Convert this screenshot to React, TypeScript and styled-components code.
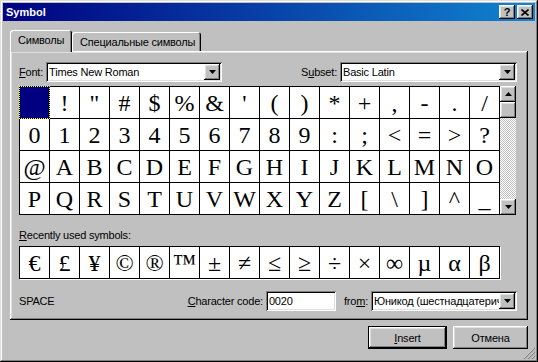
import styled, { createGlobalStyle, css } from "styled-components";

const GlobalStyle = createGlobalStyle`
  html, body {
    margin: 0;
    padding: 0;
    background: #c0c0c0;
  }

  body {
    font-family: "Liberation Sans", Arial, sans-serif;
    font-size: 11px;
    letter-spacing: -0.2px;
    color: #000;
  }

  * {
    box-sizing: border-box;
  }
`;

const raised = css`
  background: #c0c0c0;
  box-shadow: inset -1px -1px #000, inset 1px 1px #fff, inset -2px -2px #808080,
    inset 2px 2px #dfdfdf;
`;

const sunken = css`
  background: #fff;
  box-shadow: inset 1px 1px #808080, inset -1px -1px #fff, inset 2px 2px #000,
    inset -2px -2px #dfdfdf;
`;

const Window = styled.div`
  position: relative;

  display: flex;
  flex-direction: column;

  width: 538px;
  height: 362px;
  padding: 3px;

  background: #c0c0c0;
  box-shadow: inset -1px -1px #000, inset 1px 1px #dfdfdf, inset -2px -2px #808080,
    inset 2px 2px #fff;
`;

const TitleBar = styled.div`
  display: flex;
  align-items: center;
  justify-content: space-between;

  height: 18px;
  padding: 0 2px 0 3px;

  background: linear-gradient(to right, #000080, #1084d0);
`;

const Title = styled.div`
  font-weight: 700;
  font-size: 11px;
  letter-spacing: 0;
  color: #fff;
`;

const TitleButtons = styled.div`
  display: flex;
  gap: 2px;
`;

const TitleButton = styled.div`
  ${raised};

  display: flex;
  align-items: center;
  justify-content: center;

  width: 16px;
  height: 14px;

  font-weight: 700;
  font-size: 11px;
  line-height: 1;
`;

const Body = styled.div`
  display: flex;
  flex-direction: column;

  padding: 9px 7px 0 7px;
`;

const TabStrip = styled.div`
  display: flex;
  align-items: flex-end;

  height: 21px;
`;

interface TabProps {
  $active?: boolean;
}

const Tab = styled.div<TabProps>`
  position: relative;
  z-index: 1;

  display: flex;
  align-items: center;

  min-width: ${({ $active }) => ($active ? "62px" : "126px")};
  height: ${({ $active }) => ($active ? "22px" : "19px")};
  margin-bottom: ${({ $active }) => ($active ? "-1px" : "0")};
  padding: ${({ $active }) => ($active ? "0 6px 2px 8px" : "0 6px 0 8px")};

  white-space: nowrap;
  background: #c0c0c0;
  border-radius: 3px 3px 0 0;
  box-shadow: inset 1px 1px #fff, inset -1px 0 #000, inset -2px 0 #808080;
`;

const Panel = styled.div`
  display: flex;
  flex-direction: column;

  height: 269px;
  padding: 11px 11px 0 9px;

  box-shadow: inset -1px -1px #000, inset 1px 1px #fff, inset -2px -2px #808080,
    inset 2px 2px #dfdfdf;
`;

const FieldRow = styled.div`
  display: flex;
  align-items: center;
  justify-content: space-between;

  height: 20px;
`;

interface FieldGroupProps {
  $offset?: number;
}

const FieldGroup = styled.div<FieldGroupProps>`
  display: flex;
  align-items: center;
  gap: 3px;

  margin-left: ${({ $offset }) => $offset ?? 0}px;
`;

const Label = styled.span`
  white-space: nowrap;
`;

const Key = styled.span`
  text-decoration: underline;
`;

interface BoxProps {
  $width: number;
}

const Select = styled.div<BoxProps>`
  ${sunken};

  display: flex;
  align-items: center;

  width: ${({ $width }) => $width}px;
  height: 20px;
  padding: 2px;
`;

const SelectValue = styled.div`
  flex: 1;

  padding-left: 1px;
  overflow: hidden;

  white-space: nowrap;
  text-overflow: clip;
  line-height: 16px;
`;

const DropButton = styled.div`
  ${raised};

  display: flex;
  align-items: center;
  justify-content: center;
  flex: 0 0 16px;

  height: 16px;
`;

const TextBox = styled.div<BoxProps>`
  ${sunken};

  width: ${({ $width }) => $width}px;
  height: 20px;
  padding: 2px 3px;

  line-height: 16px;
`;

const SymbolArea = styled.div`
  display: flex;

  margin-top: 4px;
`;

const CharGrid = styled.div`
  display: grid;
  grid-template-columns: repeat(16, 29px);
  grid-auto-rows: 31px;
  gap: 1px;

  border: 1px solid #000;
  background: #000;
`;

interface CellProps {
  $selected?: boolean;
}

const Cell = styled.div<CellProps>`
  display: flex;
  align-items: center;
  justify-content: center;

  font-family: "Liberation Serif", "Times New Roman", serif;
  font-size: 24px;
  letter-spacing: 0;
  line-height: 1;

  background: ${({ $selected }) => ($selected ? "#000080" : "#fff")};
  outline: ${({ $selected }) => ($selected ? "1px dotted #ffff00" : "none")};
`;

const ScrollBar = styled.div`
  display: flex;
  flex-direction: column;

  width: 16px;

  background: repeating-conic-gradient(#fff 0 25%, #c0c0c0 0 50%) 0 0 / 2px 2px;
`;

const ScrollButton = styled.div`
  ${raised};

  display: flex;
  align-items: center;
  justify-content: center;

  height: 16px;
`;

const ScrollTrack = styled.div`
  flex: 1;
`;

const SectionLabel = styled.div`
  margin-top: 14px;

  line-height: 13px;
`;

const RecentGrid = styled(CharGrid)`
  margin-top: 4px;
  align-self: flex-start;

  box-shadow: 1px 1px 0 #fff;
`;

const InfoRow = styled(FieldRow)`
  margin-top: 12px;
  justify-content: flex-start;
`;

const CharName = styled.div`
  flex: 1;
`;

const Footer = styled.div`
  display: flex;
  justify-content: flex-end;
  gap: 6px;

  padding-top: 6px;
`;

interface ButtonProps {
  $default?: boolean;
  $width: number;
}

const Button = styled.div<ButtonProps>`
  display: flex;
  align-items: center;
  justify-content: center;

  width: ${({ $width }) => $width}px;
  height: 23px;

  background: #c0c0c0;
  box-shadow: ${({ $default }) =>
    $default
      ? "inset 0 0 0 1px #000, inset -2px -2px #000, inset 2px 2px #fff, inset -3px -3px #808080, inset 3px 3px #dfdfdf"
      : "inset -1px -1px #000, inset 1px 1px #fff, inset -2px -2px #808080, inset 2px 2px #dfdfdf"};
`;

const Grip = styled.svg`
  position: absolute;
  right: 3px;
  bottom: 3px;
`;

const Arrow = ({ up }: { up?: boolean }) => (
  <svg width="7" height="4" viewBox="0 0 7 4">
    <polygon points={up ? "3.5,0 7,4 0,4" : "0,0 7,0 3.5,4"} fill="#000" />
  </svg>
);

const symbolRows = [
  [" ", "!", '"', "#", "$", "%", "&", "'", "(", ")", "*", "+", ",", "-", ".", "/"],
  ["0", "1", "2", "3", "4", "5", "6", "7", "8", "9", ":", ";", "<", "=", ">", "?"],
  ["@", "A", "B", "C", "D", "E", "F", "G", "H", "I", "J", "K", "L", "M", "N", "O"],
  ["P", "Q", "R", "S", "T", "U", "V", "W", "X", "Y", "Z", "[", "\\", "]", "^", "_"],
];

const recentSymbols = ["€", "£", "¥", "©", "®", "™", "±", "≠", "≤", "≥", "÷", "×", "∞", "µ", "α", "β"];

const App = () => {
  return (
    <>
      <GlobalStyle />
      <Window>
        <TitleBar>
          <Title>Symbol</Title>
          <TitleButtons>
            <TitleButton>?</TitleButton>
            <TitleButton>
              <svg width="8" height="7" viewBox="0 0 8 7">
                <path d="M0.5 0.5 L7.5 6.5 M7.5 0.5 L0.5 6.5" stroke="#000" strokeWidth="1.6" />
              </svg>
            </TitleButton>
          </TitleButtons>
        </TitleBar>

        <Body>
          <TabStrip>
            <Tab $active>Символы</Tab>
            <Tab>Специальные символы</Tab>
          </TabStrip>

          <Panel>
            <FieldRow>
              <FieldGroup>
                <Label>
                  <Key>F</Key>ont:
                </Label>
                <Select $width={176}>
                  <SelectValue>Times New Roman</SelectValue>
                  <DropButton>
                    <Arrow />
                  </DropButton>
                </Select>
              </FieldGroup>
              <FieldGroup>
                <Label>
                  S<Key>u</Key>bset:
                </Label>
                <Select $width={177}>
                  <SelectValue>Basic Latin</SelectValue>
                  <DropButton>
                    <Arrow />
                  </DropButton>
                </Select>
              </FieldGroup>
            </FieldRow>

            <SymbolArea>
              <CharGrid>
                {symbolRows.flat().map((ch, i) => (
                  <Cell key={i} $selected={i === 0}>
                    {ch}
                  </Cell>
                ))}
              </CharGrid>
              <ScrollBar>
                <ScrollButton>
                  <Arrow up />
                </ScrollButton>
                <ScrollButton />
                <ScrollTrack />
                <ScrollButton>
                  <Arrow />
                </ScrollButton>
              </ScrollBar>
            </SymbolArea>

            <SectionLabel>
              <Key>R</Key>ecently used symbols:
            </SectionLabel>
            <RecentGrid>
              {recentSymbols.map((ch) => (
                <Cell key={ch}>{ch}</Cell>
              ))}
            </RecentGrid>

            <InfoRow>
              <CharName>SPACE</CharName>
              <FieldGroup>
                <Label>
                  <Key>C</Key>haracter code:
                </Label>
                <TextBox $width={70}>0020</TextBox>
              </FieldGroup>
              <FieldGroup $offset={8}>
                <Label>
                  fro<Key>m</Key>:
                </Label>
                <Select $width={146}>
                  <SelectValue>Юникод (шестнадцатеричный)</SelectValue>
                  <DropButton>
                    <Arrow />
                  </DropButton>
                </Select>
              </FieldGroup>
            </InfoRow>
          </Panel>

          <Footer>
            <Button $default $width={79}>
              <span>
                <Key>I</Key>nsert
              </span>
            </Button>
            <Button $width={75}>Отмена</Button>
          </Footer>
        </Body>

        <Grip width="12" height="12" viewBox="0 0 12 12">
          <path d="M11 1 L1 11 M11 5 L5 11 M11 9 L9 11" stroke="#fff" strokeWidth="1" />
          <path d="M12 1 L1 12 M12 5 L5 12 M12 9 L9 12" stroke="#808080" strokeWidth="1.2" />
        </Grip>
      </Window>
    </>
  );
};

export default App;
